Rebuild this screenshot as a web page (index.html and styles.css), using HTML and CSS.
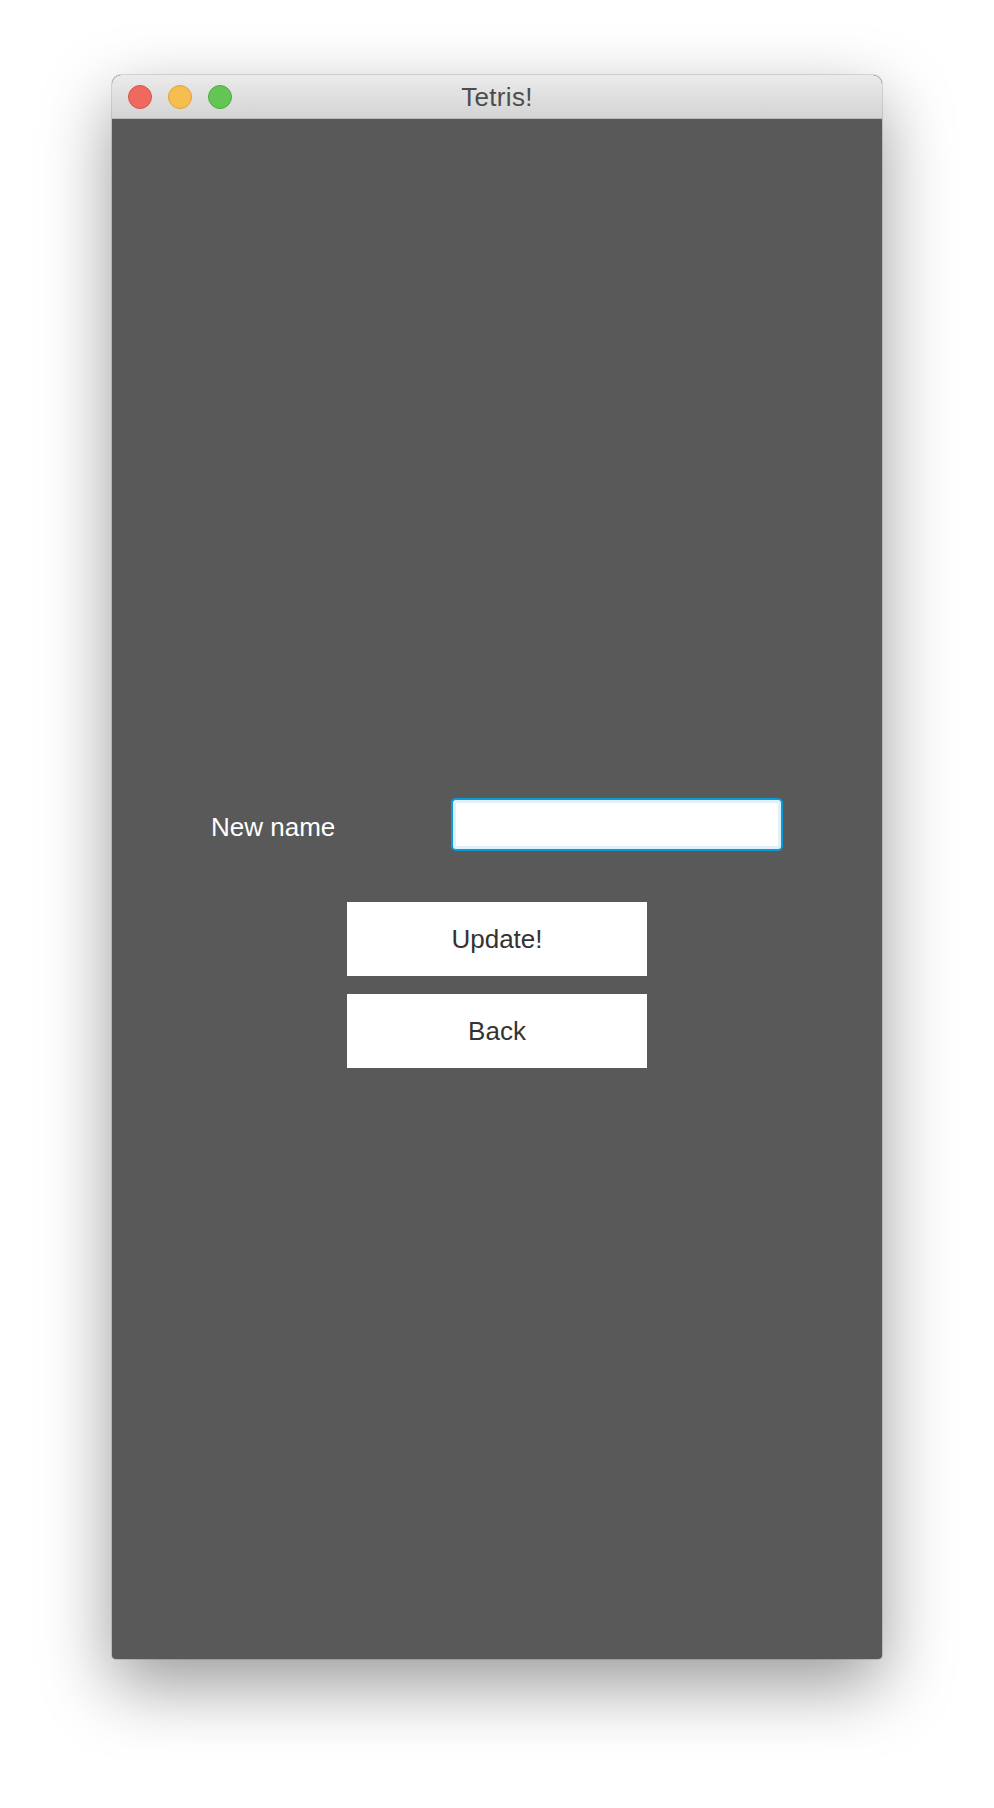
FILE: index.html
```html
<!DOCTYPE html>
<html lang="en">
<head>
    <meta charset="UTF-8">
    <meta name="viewport" content="width=device-width, initial-scale=1.0">
    <title>Tetris!</title>
    <link rel="stylesheet" href="styles.css">
</head>
<body>
    <div class="window">
        <div class="titlebar">
            <div class="lights">
                <span class="light red"></span>
                <span class="light yellow"></span>
                <span class="light green"></span>
            </div>
            <div class="title">Tetris!</div>
        </div>
        <div class="content">
            <div class="form-row">
                <label class="label" for="new-name">New name</label>
                <input type="text" id="new-name" class="input">
            </div>
            <div class="buttons">
                <button class="button">Update!</button>
                <button class="button">Back</button>
            </div>
        </div>
    </div>
</body>
</html>
```

FILE: styles.css
```css
body {
    background-color: #ffffff;
    font-family: "Liberation Sans", Arial, sans-serif;
    margin: 0;
    padding: 75px 0 0 112px;
    min-height: 1808px;
    box-sizing: border-box;
    overflow: hidden;
}
.window {
    width: 770px;
    height: 1584px;
    border-radius: 9px 9px 4px 4px;
    background-color: #595959;
    box-shadow: 0 0 0 1px rgba(0, 0, 0, 0.12), 0 26px 70px rgba(0, 0, 0, 0.4);
    display: flex;
    flex-direction: column;
    overflow: hidden;
}
.titlebar {
    position: relative;
    height: 43px;
    border-bottom: 1px solid #b9b9b9;
    background: linear-gradient(#ebebeb, #d4d4d4);
    border-radius: 9px 9px 0 0;
    display: flex;
    align-items: center;
    justify-content: center;
}
.lights {
    position: absolute;
    left: 16px;
    top: 10px;
    display: flex;
    gap: 16px;
}
.light {
    width: 22px;
    height: 22px;
    border-radius: 50%;
    border: 1px solid;
}
.light.red {
    background-color: #ee6a5f;
    border-color: #d5574d;
}
.light.yellow {
    background-color: #f6be4f;
    border-color: #dca33b;
}
.light.green {
    background-color: #62c554;
    border-color: #52a944;
}
.title {
    font-size: 26px;
    letter-spacing: 0.3px;
    color: #4d4d4d;
    margin-top: 2px;
}
.content {
    flex: 1;
    display: flex;
    flex-direction: column;
    align-items: center;
    padding-top: 679px;
}
.form-row {
    width: 572px;
    display: flex;
    justify-content: space-between;
    align-items: center;
}
.label {
    font-size: 26px;
    color: #ffffff;
    padding-top: 5px;
}
.input {
    -webkit-appearance: none;
    appearance: none;
    width: 332px;
    height: 53px;
    box-sizing: border-box;
    border: 2px solid #0a9bd6;
    border-radius: 5px;
    box-shadow: inset 0 0 0 3px #dff0fa;
    background-color: #ffffff;
    outline: none;
    margin: 0;
}
.buttons {
    display: flex;
    flex-direction: column;
    gap: 18px;
    margin-top: 51px;
}
.button {
    -webkit-appearance: none;
    appearance: none;
    width: 300px;
    height: 74px;
    border: none;
    border-radius: 0;
    background-color: #ffffff;
    color: #333333;
    font-family: "Liberation Sans", Arial, sans-serif;
    font-size: 26px;
    padding: 0;
    margin: 0;
    cursor: pointer;
}
```
